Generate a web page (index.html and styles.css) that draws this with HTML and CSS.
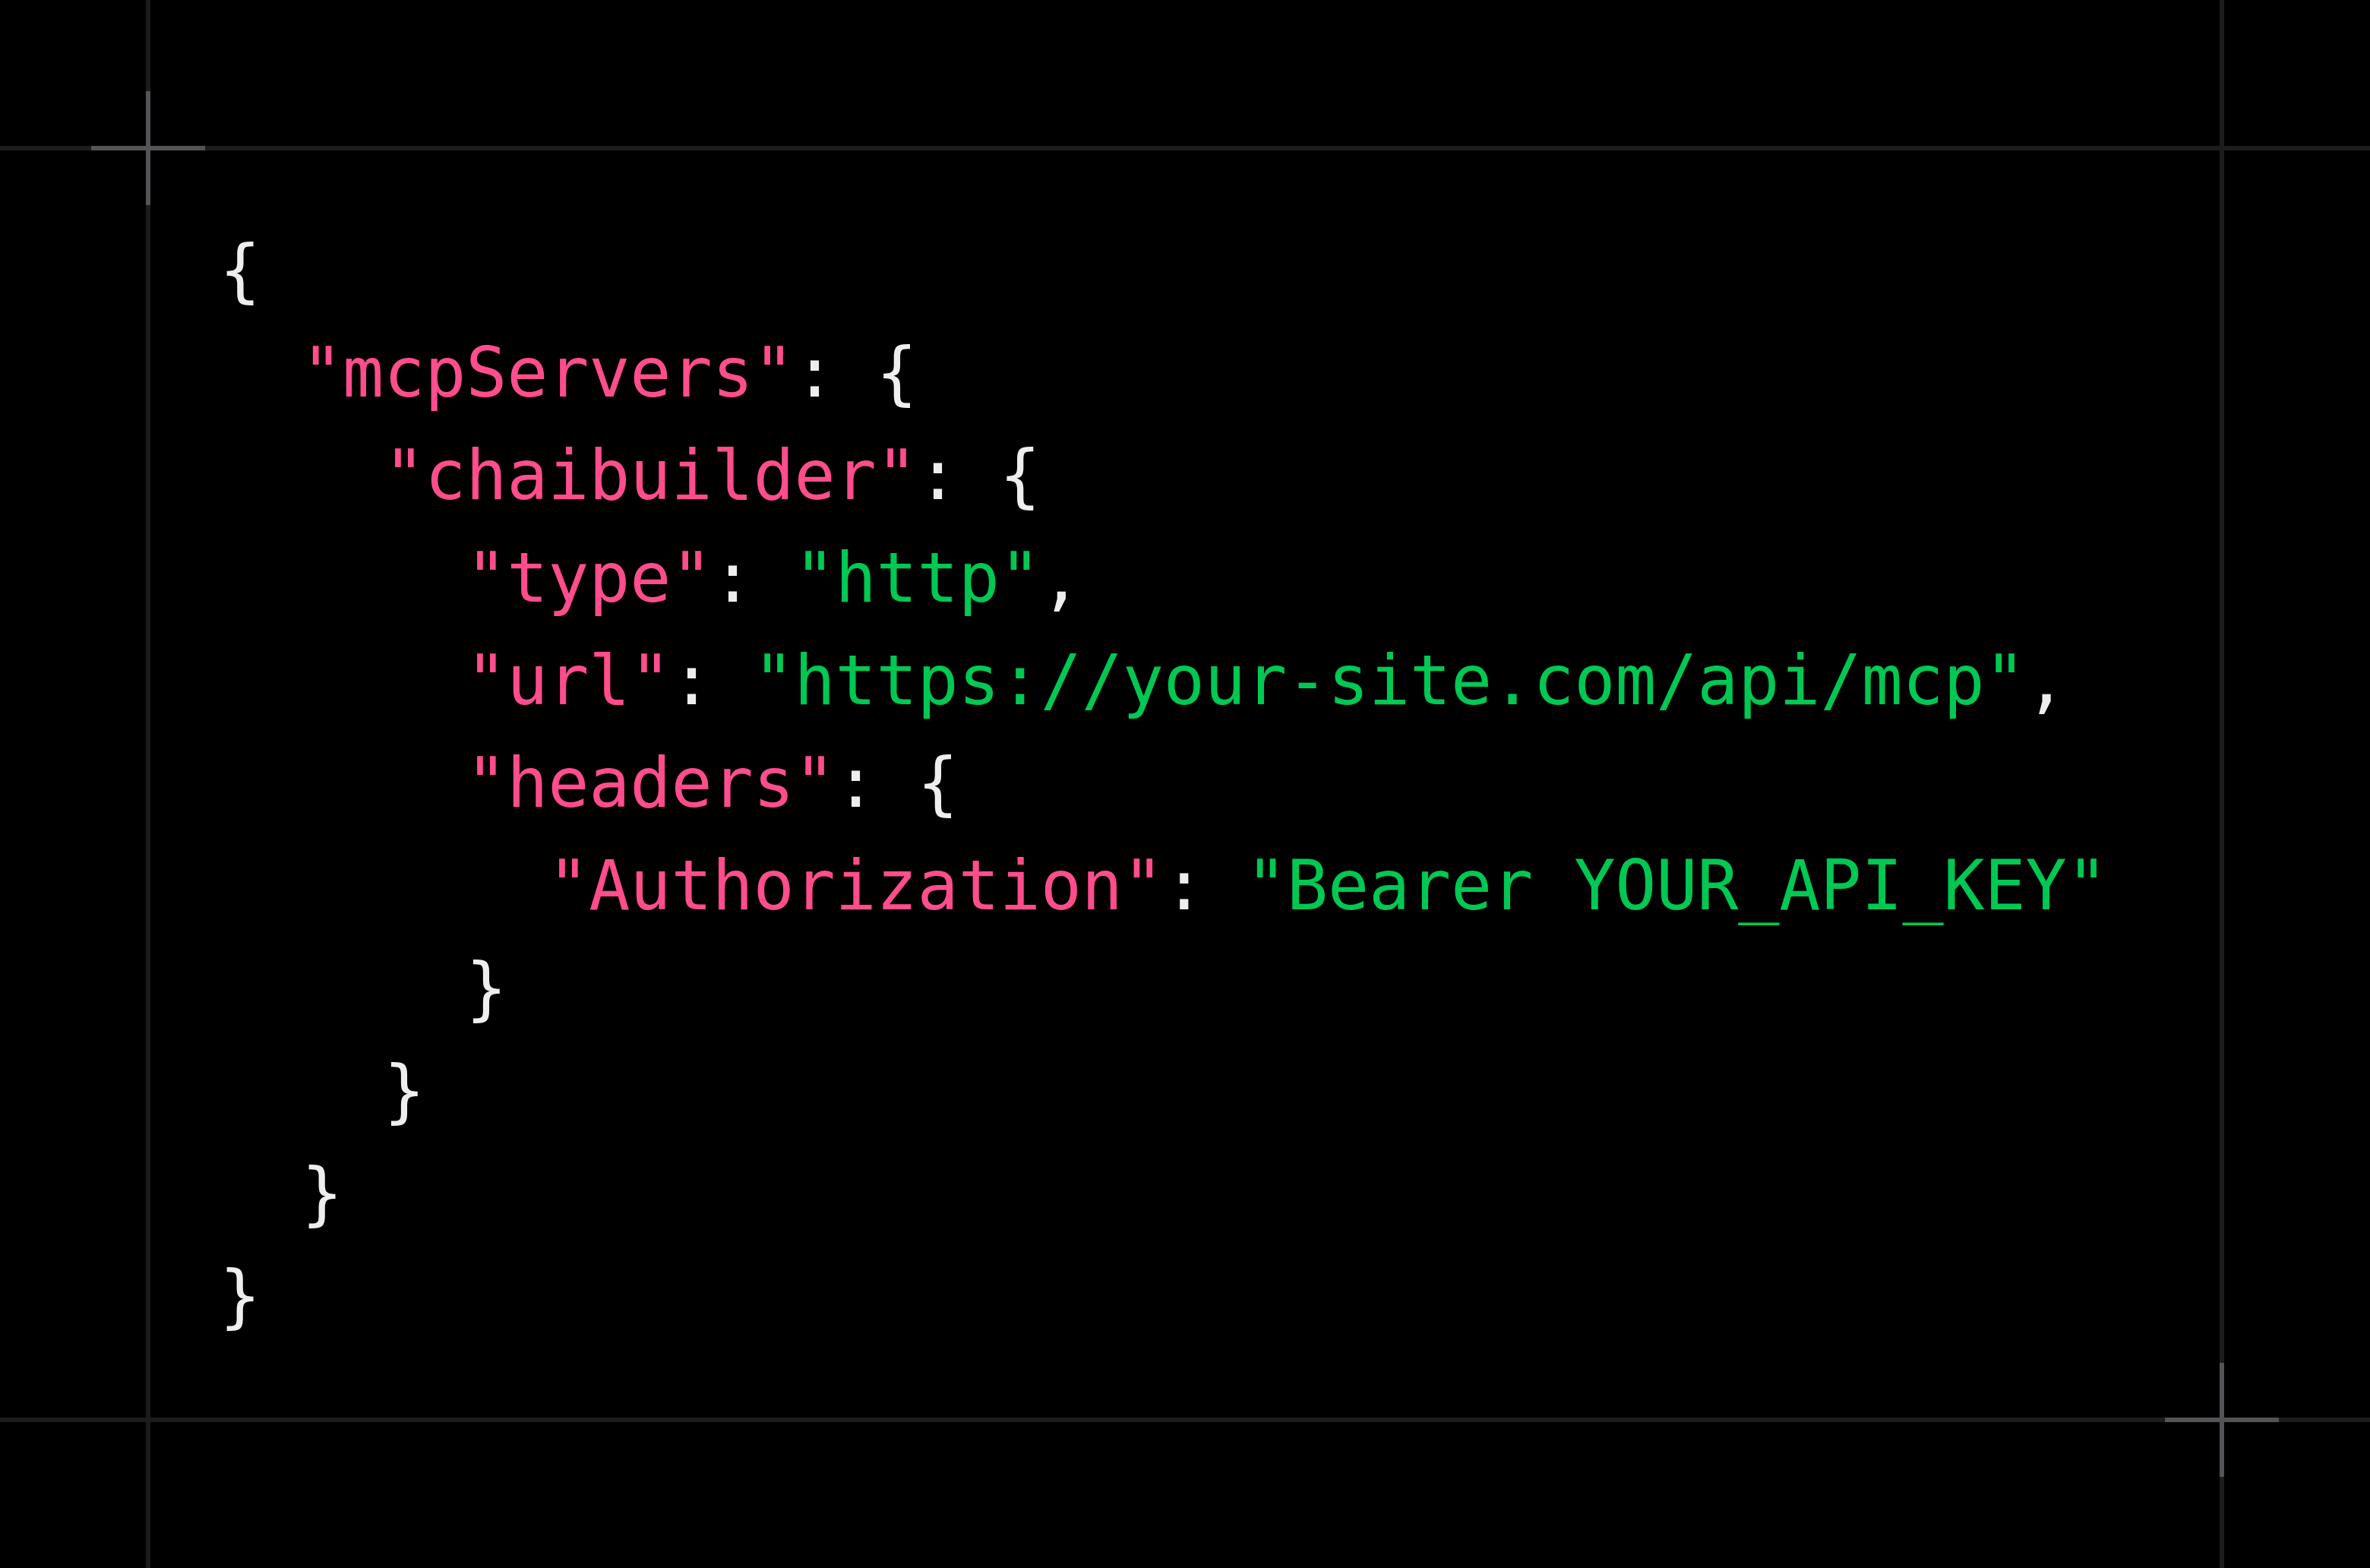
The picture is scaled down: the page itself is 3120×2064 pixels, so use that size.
FILE: index.html
```html
<!DOCTYPE html>
<html lang="en">
<head>
<meta charset="utf-8">
<title>MCP config</title>
<link rel="stylesheet" href="styles.css">
</head>
<body>
<div class="stage">
  <div class="guide guide-top"></div>
  <div class="guide guide-bottom"></div>
  <div class="guide guide-left"></div>
  <div class="guide guide-right"></div>
  <div class="cross cross-tl"></div>
  <div class="cross cross-br"></div>
  <div class="frame">
<pre class="code"><span class="p">{</span>
  <span class="k">"mcpServers"</span><span class="p">: {</span>
    <span class="k">"chaibuilder"</span><span class="p">: {</span>
      <span class="k">"type"</span><span class="p">: </span><span class="s">"http"</span><span class="p">,</span>
      <span class="k">"url"</span><span class="p">: </span><span class="s">"https://your-site.com/api/mcp"</span><span class="p">,</span>
      <span class="k">"headers"</span><span class="p">: {</span>
        <span class="k">"Authorization"</span><span class="p">: </span><span class="s">"Bearer YOUR_API_KEY"</span>
      <span class="p">}</span>
    <span class="p">}</span>
  <span class="p">}</span>
<span class="p">}</span></pre>
  </div>
</div>
</body>
</html>
```
FILE: styles.css
```css
html, body {
  margin: 0;
  padding: 0;
  background: #000;
}
.stage {
  position: relative;
  width: 3120px;
  height: 2064px;
  box-sizing: border-box;
  padding: 198px;
  overflow: hidden;
}
.frame {
  height: 100%;
  box-sizing: border-box;
  padding: 90px 91px;
}
.guide {
  position: absolute;
  background: #1c1c1c;
}
.guide-top, .guide-bottom {
  left: 0;
  right: 0;
  height: 6px;
}
.guide-top { top: 192px; }
.guide-bottom { top: 1866px; }
.guide-left, .guide-right {
  top: 0;
  bottom: 0;
  width: 6px;
}
.guide-left { left: 192px; }
.guide-right { left: 2922px; }
.cross {
  position: absolute;
  width: 150px;
  height: 150px;
}
.cross::before, .cross::after {
  content: "";
  position: absolute;
  background: #545458;
}
.cross::before {
  left: 0;
  right: 0;
  top: 72px;
  height: 6px;
}
.cross::after {
  top: 0;
  bottom: 0;
  left: 72px;
  width: 6px;
}
.cross-tl { left: 120px; top: 120px; }
.cross-br { left: 2850px; top: 1794px; }
.code {
  margin: 0;
  font-family: "DejaVu Sans Mono", "Liberation Mono", monospace;
  font-size: 90px;
  line-height: 135px;
  letter-spacing: -0.15px;
  color: #eeeeee;
}
.k { color: #ff4d8d; }
.s { color: #00c853; }
.p { color: #eeeeee; }
```
